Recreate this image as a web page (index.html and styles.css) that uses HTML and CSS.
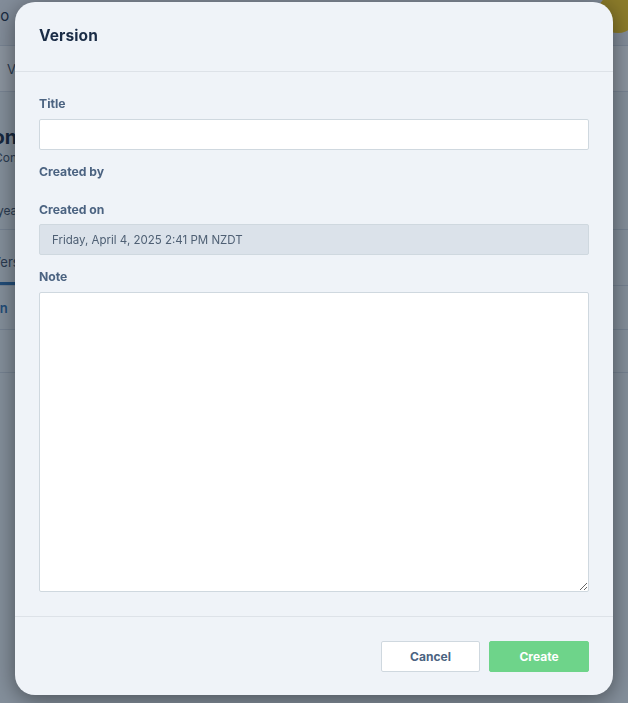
FILE: index.html
```html
<!DOCTYPE html>
<html lang="en">
<head>
<meta charset="utf-8">
<title>Version</title>
<link rel="stylesheet" href="styles.css">
</head>
<body>
<div class="page">
  <header class="topbar">
    <span class="logo">Repo</span>
    <span class="avatar"></span>
  </header>
  <nav class="nav">
    <span class="nav-item">Versions</span>
  </nav>
  <section class="hero">
    <h1 class="hero-title">Version</h1>
    <p class="hero-sub">Content versions</p>
    <p class="hero-meta">year</p>
  </section>
  <div class="tabs">
    <span class="tab active">Versions</span>
  </div>
  <div class="row"><span class="link">Open</span></div>
  <div class="row empty"></div>
</div>

<div class="overlay"></div>

<div class="modal" role="dialog" aria-labelledby="mtitle">
  <div class="modal-header">
    <h2 id="mtitle" class="modal-title">Version</h2>
  </div>
  <div class="modal-body">
    <label class="label" for="title">Title</label>
    <input id="title" class="input" type="text">

    <div class="label">Created by</div>
    <div class="value-empty"></div>

    <div class="label label-tight">Created on</div>
    <div class="readonly">Friday, April 4, 2025 2:41 PM NZDT</div>

    <label class="label" for="note">Note</label>
    <textarea id="note" class="textarea"></textarea>
  </div>
  <div class="modal-footer">
    <button class="btn btn-cancel" type="button">Cancel</button>
    <button class="btn btn-create" type="button">Create</button>
  </div>
</div>
</body>
</html>
```

FILE: styles.css
```css
* { box-sizing: border-box; }

html, body {
  margin: 0;
  padding: 0;
  height: 100%;
  overflow: hidden;
}

body {
  font-family: Inter, "Open Sans", Arial, sans-serif;
  background: #f1f4f7;
  color: #1b2c44;
}

/* ---- background page ---- */
.page {
  height: 703px;
  background: #f1f4f7;
}

.topbar {
  height: 46px;
  background: #eef1f4;
  border-bottom: 1px solid #d9dfe6;
  display: flex;
  align-items: flex-start;
  justify-content: space-between;
  padding: 5px 0 0 0;
}

.logo {
  font-size: 15px;
  color: #1b2c44;
  margin-left: -27px;
  line-height: 22px;
}

.avatar {
  width: 40px;
  height: 40px;
  border-radius: 50%;
  background: #ffcc14;
  margin-top: -12px;
  margin-right: -10px;
}

.nav {
  height: 46px;
  background: #ffffff;
  border-bottom: 1px solid #d9dfe6;
  display: flex;
  align-items: center;
  padding-left: 7px;
}

.nav-item {
  font-size: 13px;
  color: #3a4b60;
}

.hero {
  background: #f1f4f7;
  height: 138px;
  padding-top: 32px;
  border-bottom: 1px solid #d3dae2;
}

.hero-title {
  margin: 0 0 0 -58px;
  font-size: 20px;
  font-weight: 700;
  color: #15263d;
  line-height: 26px;
}

.hero-sub {
  margin: 0 0 0 -6px;
  font-size: 12px;
  color: #3c4d62;
  line-height: 16px;
}

.hero-meta {
  margin: 37px 0 0 -3px;
  font-size: 12px;
  color: #3c4d62;
}

.tabs {
  height: 56px;
  display: flex;
  align-items: flex-end;
  border-bottom: 1px solid #d3dae2;
}

.tab {
  font-size: 13px;
  color: #3c4d62;
  margin-left: -28px;
  padding: 0 20px 12px;
  border-bottom: 3px solid #2a6fb0;
}

.row {
  height: 44px;
  border-bottom: 1px solid #d3dae2;
  display: flex;
  align-items: center;
}

.row.empty { height: 43px; }

.link {
  font-size: 13px;
  color: #2a6fb0;
  margin-left: -26px;
  font-weight: 600;
}

.overlay {
  position: fixed;
  inset: 0;
  background: rgba(24, 42, 64, 0.5);
}

/* ---- modal ---- */
.modal {
  position: absolute;
  left: 15px;
  top: 2px;
  width: 598px;
  height: 693px;
  background: #eff3f8;
  border-radius: 20px;
  box-shadow: 0 4px 22px rgba(0, 0, 0, 0.45);
  display: flex;
  flex-direction: column;
  overflow: hidden;
}

.modal-header {
  flex-shrink: 0;
  height: 70px;
  border-bottom: 1px solid #dde2e8;
  display: flex;
  align-items: center;
  padding: 0 24px;
}

.modal-title {
  margin: 0;
  font-size: 15.5px;
  font-weight: 700;
  color: #1a2c46;
  letter-spacing: 0.1px;
  padding-bottom: 2px;
}

.modal-body {
  flex: 1;
  min-height: 0;
  padding: 25px 24px 0;
  display: flex;
  flex-direction: column;
}

.label {
  display: block;
  font-size: 12.2px;
  font-weight: 700;
  color: #4b6381;
  line-height: 14px;
  margin-bottom: 8px;
}

.label-tight { margin-bottom: 7px; }

.input {
  display: block;
  flex-shrink: 0;
  width: 100%;
  height: 31px;
  background: #ffffff;
  border: 1px solid #cfd8df;
  border-radius: 2px;
  margin: 0 0 15px;
  font: inherit;
  padding: 0 12px;
}

.value-empty {
  height: 16px;
  flex-shrink: 0;
}

.readonly {
  flex-shrink: 0;
  height: 31px;
  background: #dbe2ea;
  border: 1px solid #cfd8df;
  border-radius: 2px;
  display: flex;
  align-items: center;
  padding: 0 12px;
  font-size: 11.5px;
  color: #4f6074;
  margin-bottom: 15px;
}

.textarea {
  display: block;
  flex-shrink: 0;
  width: 100%;
  height: 300px;
  background: #ffffff;
  border: 1px solid #cfd8df;
  border-radius: 2px;
  resize: vertical;
  font: inherit;
  margin: 0;
}

.modal-footer {
  flex-shrink: 0;
  border-top: 1px solid #dde2e8;
  height: 79px;
  display: flex;
  justify-content: flex-end;
  align-items: flex-start;
  gap: 9px;
  padding: 24px 24px 0;
}

.btn {
  height: 31px;
  width: 100px;
  border-radius: 2px;
  font-family: Inter, "Open Sans", Arial, sans-serif;
  font-size: 12px;
  font-weight: 700;
  cursor: pointer;
}

.btn-cancel {
  width: 99px;
  background: #ffffff;
  border: 1px solid #cfd8df;
  color: #4b6381;
}

.btn-create {
  background: #6ed48a;
  border: 1px solid #6ed48a;
  color: #ffffff;
}
```
